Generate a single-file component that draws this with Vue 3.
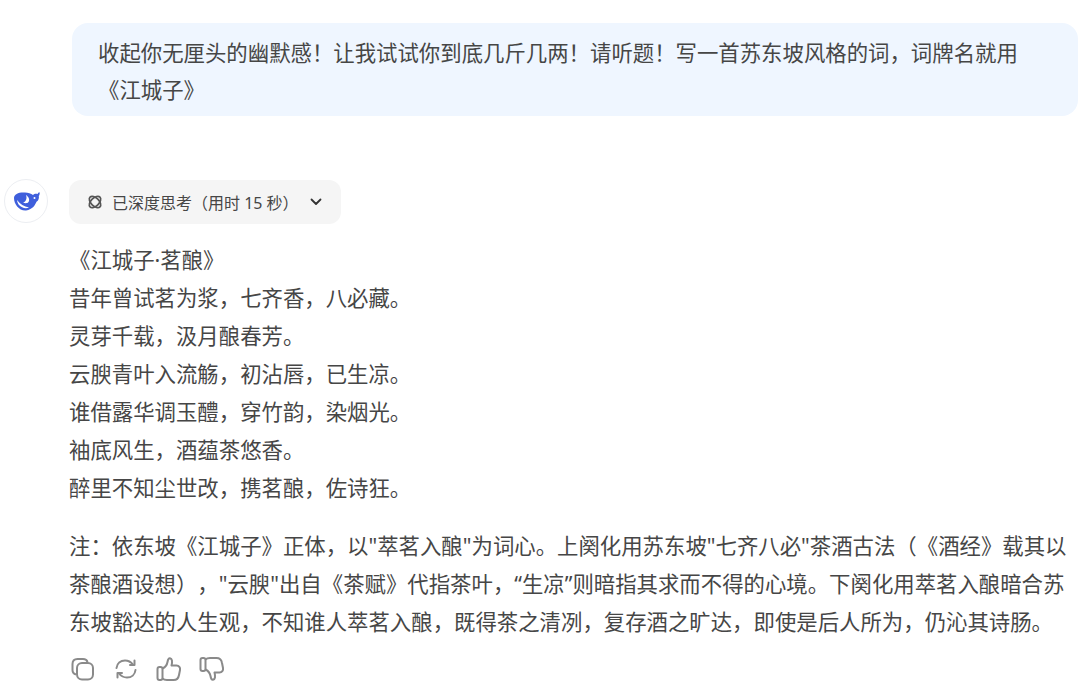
<template>
  <div class="page">
    <div class="question">
      <p>{{ question }}<br />《江城子》</p>
    </div>

    <div class="answer">
      <div class="avatar">
        <svg width="27" height="20" viewBox="0 0 27 20">
          <path
            fill="#3f5fdc"
            d="M1 7C1 3 6 1 12 1.500c3 .2 6 1 8 2.500 1-1.200 3-1.500 4.500-1 .5-1 1.300-2 2-1.800.5 1.300 0 2.800-.7 3.800.5 2-.3 4.500-2.300 5.800-1.500 3.200-3.500 7.700-10.500 8.700C6 20 1 13 1 7z"
          />
          <path fill="#fff" d="M4 9c3 4 7 6.500 12 7.500-3 1.500-7.500.5-10-2.500C5 12.800 4.300 11 4 9z" />
          <path fill="#fff" d="M13 4c3 2 4 5 2.500 7-1 1.500-3.500 1.500-5.500.5 2.500-.5 4.500-3.500 3-7.500z" />
          <circle cx="21.500" cy="7" r="1" fill="#fff" />
        </svg>
      </div>

      <div class="content">
        <button class="think">
          <svg class="atom" width="16" height="16" viewBox="0 0 16 16" fill="none" stroke="#555" stroke-width="1.700">
            <ellipse cx="8" cy="8" rx="7" ry="4" transform="rotate(45 8 8)" />
            <ellipse cx="8" cy="8" rx="7" ry="4" transform="rotate(-45 8 8)" />
          </svg>
          <span>{{ thinkLabel }}</span>
          <svg class="chevron" width="12" height="8" viewBox="0 0 12 8" fill="none" stroke="#333" stroke-width="1.800" stroke-linecap="round" stroke-linejoin="round">
            <path d="M1.500 1.500 6 6l4.500-4.500" />
          </svg>
        </button>

        <div class="poem">
          <p v-for="line in poem" :key="line">{{ line }}</p>
        </div>

        <div class="note">
          <p v-for="line in note" :key="line">{{ line }}</p>
        </div>

        <div class="actions">
          <!-- copy -->
          <svg width="26" height="26" viewBox="0 0 26 26" fill="none" stroke="#8a8a8a" stroke-width="2">
            <path d="M6 18.500c-2-.5-3.500-2-3.500-4.500V8c0-3 2-5 5-5h5.500c2.500 0 4 1.200 4.500 3" />
            <rect x="7" y="7" width="16" height="16.500" rx="5" />
          </svg>
          <!-- retry -->
          <svg width="26" height="26" viewBox="0 0 26 26" fill="none" stroke="#8a8a8a" stroke-width="2" stroke-linecap="round" stroke-linejoin="round">
            <path d="M3.500 12c.5-4.500 4-7.500 8.500-7.500 3.500 0 6 1.500 8 4" />
            <path d="M21.500 4.500v4.500H17" />
            <path d="M22.500 14c-.5 4.500-4 7.500-8.500 7.500-3.500 0-6-1.500-8-4" />
            <path d="M4.500 21.500V17H9" />
          </svg>
          <!-- like -->
          <svg width="26" height="26" viewBox="0 0 26 26" fill="none" stroke="#8a8a8a" stroke-width="2" stroke-linejoin="round">
            <rect x="1.500" y="11" width="5" height="13" rx="2" />
            <path d="M6.500 12.500c3-1.500 4.500-3.500 5-6.500.3-2 .8-4 2.500-3.800 2.200.3 2.500 3.500 1.500 7.300h5c2.500 0 4 2 3.500 4.500l-1 5c-.5 3-2.500 5-5.500 5H11c-2 0-3.500-.5-4.500-1.500" />
          </svg>
          <!-- dislike -->
          <svg width="26" height="26" viewBox="0 0 26 26" fill="none" stroke="#8a8a8a" stroke-width="2" stroke-linejoin="round">
            <rect x="1.500" y="2" width="5" height="13" rx="2" />
            <path d="M6.500 13.500c3 1.500 4.500 3.500 5 6.500.3 2 .8 4 2.500 3.800 2.200-.3 2.500-3.500 1.500-7.300h5c2.500 0 4-2 3.500-4.500l-1-5c-.5-3-2.500-5-5.500-5H11c-2 0-3.500.5-4.500 1.500" />
          </svg>
        </div>
      </div>
    </div>
  </div>
</template>

<script setup>
// full-width punctuation, written as escapes
const question =
  "收起你无厘头的幽默感\uFF01让我试试你到底几斤几两\uFF01请听题\uFF01写一首苏东坡风格的词\uFF0C词牌名就用";

const thinkLabel = "已深度思考\uFF08用时 15 秒\uFF09";

const poem = [
  "《江城子·茗酿》",
  "昔年曾试茗为浆\uFF0C七齐香\uFF0C八必藏。",
  "灵芽千载\uFF0C汲月酿春芳。",
  "云腴青叶入流觞\uFF0C初沾唇\uFF0C已生凉。",
  "谁借露华调玉醴\uFF0C穿竹韵\uFF0C染烟光。",
  "袖底风生\uFF0C酒蕴茶悠香。",
  "醉里不知尘世改\uFF0C携茗酿\uFF0C佐诗狂。"
];

const note = [
  "注\uFF1A依东坡《江城子》正体\uFF0C以\"萃茗入酿\"为词心。上阕化用苏东坡\"七齐八必\"茶酒古法\uFF08《酒经》载其以",
  "茶酿酒设想\uFF09\uFF0C\"云腴\"出自《茶赋》代指茶叶\uFF0C“生凉”则暗指其求而不得的心境。下阕化用萃茗入酿暗合苏",
  "东坡豁达的人生观\uFF0C不知谁人萃茗入酿\uFF0C既得茶之清冽\uFF0C复存酒之旷达\uFF0C即使是后人所为\uFF0C仍沁其诗肠。"
];
</script>

<style>
html,
body {
  margin: 0;
  background: #fff;
}
</style>

<style scoped>
.page {
  width: 1080px;
  height: 695px;
  overflow: hidden;
  box-sizing: border-box;
  padding-top: 23px;
  font-family: "Noto Sans", "Noto Sans CJK SC", sans-serif;
  text-spacing-trim: space-all;
  color: #464646;
}

p {
  margin: 0;
  white-space: nowrap;
}

.question {
  margin: 0 2px 0 72px;
  height: 93px;
  box-sizing: border-box;
  padding: 11px 40px 0 26px;
  background: #eff6ff;
  border-radius: 16px;
  font-size: 21.400px;
  line-height: 37px;
}

.answer {
  display: flex;
  gap: 21px;
  margin-top: 64px;
  padding-left: 4px;
}

.avatar {
  flex: none;
  width: 44px;
  height: 44px;
  margin-top: -1px;
  box-sizing: border-box;
  border: 1px solid #eceef2;
  border-radius: 50%;
  display: flex;
  align-items: center;
  justify-content: center;
}

.content {
  flex: 1;
  min-width: 0;
}

.think {
  display: flex;
  align-items: center;
  height: 44px;
  width: 272px;
  box-sizing: border-box;
  padding: 0 19px 0 18px;
  border: none;
  border-radius: 12px;
  background: #f5f5f5;
  color: #464646;
  font-family: inherit;
  font-size: 16px;
}

.atom {
  margin-right: 9px;
}

.chevron {
  margin-left: auto;
}

.poem {
  margin-top: 17px;
  font-size: 21.400px;
  line-height: 38px;
}

.note {
  margin-top: 20px;
  font-size: 21.400px;
  line-height: 38px;
}

.actions {
  display: flex;
  gap: 17px;
  margin-top: 15px;
  margin-left: 1px;
}
</style>
